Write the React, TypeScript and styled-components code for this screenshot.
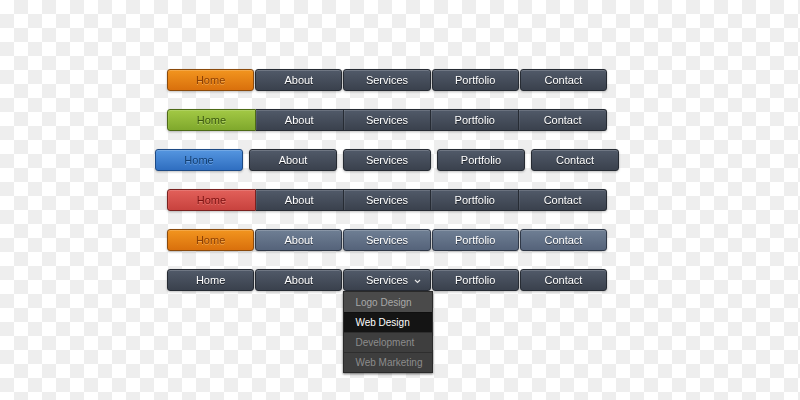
import React from 'react';
import styled, { createGlobalStyle, css } from 'styled-components';

const GlobalStyle = createGlobalStyle`
  html, body {
    margin: 0;
    padding: 0;
  }
  body {
    width: 800px;
    height: 400px;
    overflow: hidden;
    font-family: "Liberation Sans", Arial, sans-serif;
    background-color: #ffffff;
    background-image:
      linear-gradient(45deg, #eeeeee 25%, transparent 25%, transparent 75%, #eeeeee 75%),
      linear-gradient(45deg, #eeeeee 25%, transparent 25%, transparent 75%, #eeeeee 75%);
    background-size: 28px 28px;
    background-position: 0 0, 14px 14px;
  }
`;

type Tone = 'dark' | 'slate' | 'orange' | 'green' | 'blue' | 'red';

const tones: Record<Tone, { top: string; bottom: string; border: string; text: string; shadow: string }> = {
  dark: { top: '#515a69', bottom: '#3a414d', border: '#262b33', text: '#ffffff', shadow: 'rgba(0,0,0,0.6)' },
  slate: { top: '#6f7f94', bottom: '#55637a', border: '#2f3847', text: '#ffffff', shadow: 'rgba(0,0,0,0.5)' },
  orange: { top: '#f2951f', bottom: '#d9700c', border: '#8a4a0c', text: '#8a3f05', shadow: 'rgba(255,210,140,0.5)' },
  green: { top: '#a3c945', bottom: '#7fa82c', border: '#4d6a17', text: '#38550d', shadow: 'rgba(220,245,160,0.5)' },
  blue: { top: '#5596e0', bottom: '#2f6ec0', border: '#1d4a85', text: '#123e70', shadow: 'rgba(170,210,255,0.4)' },
  red: { top: '#e2605a', bottom: '#c8423e', border: '#7a2220', text: '#7a0f0f', shadow: 'rgba(255,180,170,0.4)' },
};

const Page = styled.div`
  width: 464px;
  margin-left: 155px;
  padding-top: 69px;
  display: flex;
  flex-direction: column;
  align-items: center;
  gap: 18px;
`;

type Layout = 'joined' | 'split' | 'spaced';

const Bar = styled.div<{ $layout: Layout }>`
  display: flex;
  height: 22px;
  width: ${p => (p.$layout === 'spaced' ? '464px' : '440px')};
  gap: ${p => (p.$layout === 'spaced' ? '6px' : p.$layout === 'split' ? '1px' : '0')};
  filter: drop-shadow(0 1px 1px rgba(0, 0, 0, 0.25));
`;

const Item = styled.div<{ $tone: Tone; $layout: Layout }>`
  position: relative;
  flex: 1;
  display: flex;
  align-items: center;
  justify-content: center;
  box-sizing: border-box;
  font-size: 11px;
  color: ${p => tones[p.$tone].text};
  text-shadow: 0 1px 0 ${p => tones[p.$tone].shadow};
  background: linear-gradient(${p => tones[p.$tone].top}, ${p => tones[p.$tone].bottom});
  border: 1px solid ${p => tones[p.$tone].border};
  border-radius: 3px;
  box-shadow: inset 0 1px 0 rgba(255, 255, 255, 0.18);
  ${p =>
    p.$layout === 'joined' &&
    css`
      border-radius: 0;
      border-left-width: 0;
      box-shadow: inset 1px 0 0 rgba(255, 255, 255, 0.08), inset 0 1px 0 rgba(255, 255, 255, 0.15);
      &:first-child {
        border-left-width: 1px;
        border-radius: 3px 0 0 3px;
      }
      &:last-child {
        border-radius: 0 3px 3px 0;
      }
    `}
`;

const Chevron = styled.svg`
  position: absolute;
  right: 9px;
  top: 9px;
  width: 7px;
  height: 5px;
`;

const Menu = styled.div`
  position: absolute;
  top: 21px;
  left: -1px;
  width: 88px;
  display: flex;
  flex-direction: column;
  background: #474747;
  border: 1px solid #2a2a2a;
  box-shadow: 0 1px 2px rgba(0, 0, 0, 0.35);
  z-index: 2;
`;

const MenuItem = styled.div<{ $active?: boolean; $dim?: boolean }>`
  height: 20px;
  display: flex;
  align-items: center;
  padding-left: 11px;
  font-size: 10px;
  text-shadow: none;
  color: ${p => (p.$active ? '#ffffff' : p.$dim ? '#8c8c8c' : '#a8a8a8')};
  background: ${p => (p.$active ? '#141414' : p.$dim ? '#3e3e3e' : '#4a4a4a')};
  border-top: 1px solid rgba(0, 0, 0, 0.25);
  box-sizing: border-box;
  &:first-child {
    border-top: none;
  }
`;

const labels = ['Home', 'About', 'Services', 'Portfolio', 'Contact'];

const rows: { layout: Layout; home: Tone; rest: Tone }[] = [
  { layout: 'split', home: 'orange', rest: 'dark' },
  { layout: 'joined', home: 'green', rest: 'dark' },
  { layout: 'spaced', home: 'blue', rest: 'dark' },
  { layout: 'joined', home: 'red', rest: 'dark' },
  { layout: 'split', home: 'orange', rest: 'slate' },
];

const App: React.FC = () => {
  return (
    <>
      <GlobalStyle />
      <Page>
        {rows.map((row, i) => (
          <Bar key={i} $layout={row.layout}>
            {labels.map((label, j) => (
              <Item key={label} $layout={row.layout} $tone={j === 0 ? row.home : row.rest}>
                {label}
              </Item>
            ))}
          </Bar>
        ))}
        <Bar $layout="split">
          {labels.map(label => (
            <Item key={label} $layout="split" $tone="dark">
              {label}
              {label === 'Services' && (
                <>
                  <Chevron viewBox="0 0 7 5">
                    <path d="M1 1 L3.5 3.5 L6 1" fill="none" stroke="#e8e8e8" strokeWidth="1.1" />
                  </Chevron>
                  <Menu>
                    <MenuItem>Logo Design</MenuItem>
                    <MenuItem $active>Web Design</MenuItem>
                    <MenuItem $dim>Development</MenuItem>
                    <MenuItem $dim>Web Marketing</MenuItem>
                  </Menu>
                </>
              )}
            </Item>
          ))}
        </Bar>
      </Page>
    </>
  );
};

export default App;
